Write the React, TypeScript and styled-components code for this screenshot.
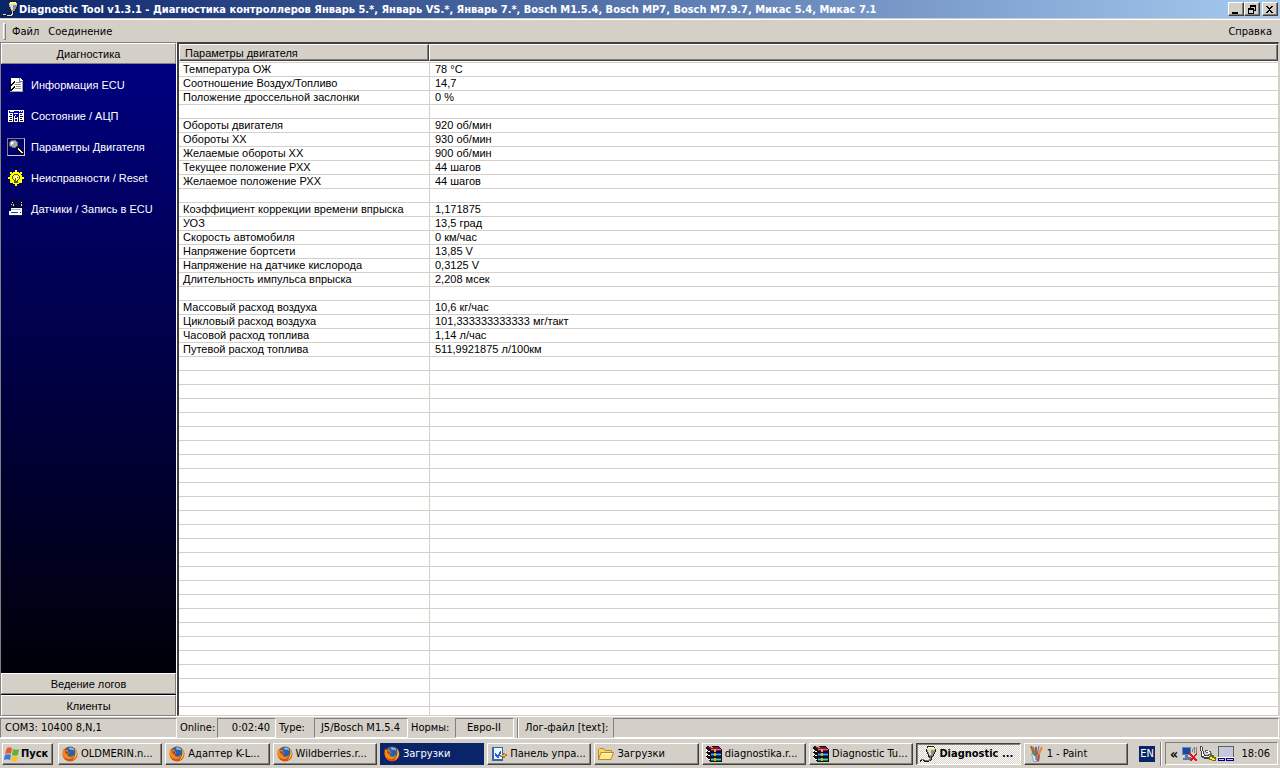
import React from 'react';
import styled, { createGlobalStyle, css } from 'styled-components';

const face = '#d4d0c8';
const uiFont = '"DejaVu Sans Condensed", "Noto Sans", sans-serif';
const gridFont = '"Liberation Sans", Arial, sans-serif';

const raised = css`
  border: 1px solid;
  border-color: #fff #404040 #404040 #fff;
  box-shadow: inset -1px -1px 0 #808080;
`;
const sunken = css`
  border: 1px solid;
  border-color: #808080 #fff #fff #808080;
`;

const Global = createGlobalStyle`
  *, *::before, *::after { box-sizing: border-box; }
  body { margin: 0; background: ${face}; color: #000; font: 11px/14px ${uiFont}; }
  button { font: inherit; color: inherit; padding: 0; margin: 0; border: 0; background: none; border-radius: 0; }
  svg { display: block; flex: none; }
`;

const Desktop = styled.div`
  height: 100vh;
  min-height: 400px;
  display: flex;
  flex-direction: column;
  background: ${face};
`;

const TitleBar = styled.header`
  flex: none;
  height: 18px;
  display: flex;
  align-items: center;
  padding: 0 2px;
  gap: 1px;
  background: linear-gradient(90deg, #0a246a, #a6caf0);
`;
const Title = styled.h1`
  flex: 1;
  min-width: 0;
  margin: 0;
  padding-top: 2px;
  overflow: hidden;
  white-space: nowrap;
  color: #fff;
  font: bold 11px/16px ${uiFont};
`;
const CaptionButton = styled.button<{ $apart?: boolean }>`
  ${raised}
  width: 16px;
  height: 14px;
  margin-left: ${p => (p.$apart ? 1 : -1)}px;
  background: ${face};
  display: grid;
  place-items: center;
`;

const MenuBar = styled.nav`
  flex: none;
  height: 23px;
  display: flex;
  align-items: center;
  margin-top: 1px;
  padding: 1px 5px 0 3px;
  border-top: 1px solid #fff;
`;
const Grip = styled.span`
  width: 3px;
  height: 17px;
  margin-right: 3px;
  border: 1px solid;
  border-color: #fff #808080 #808080 #fff;
`;
const MenuItem = styled.button<{ $end?: boolean }>`
  padding: 0 3px;
  margin-right: ${p => (p.$end ? 0 : 3)}px;
  margin-left: ${p => (p.$end ? 'auto' : 0)};
`;

const Workspace = styled.div`
  flex: 1;
  min-height: 0;
  display: flex;
`;
const Sidebar = styled.aside`
  flex: none;
  width: 177px;
  display: flex;
  flex-direction: column;
  border: solid #808080;
  border-width: 1px 0 0 1px;
  border-right: 1px solid #fff;
  background: linear-gradient(#000084, #000);
  font: 11px/14px ${gridFont};
`;
const SectionButton = styled.button<{ $gap?: boolean }>`
  flex: none;
  height: 21px;
  margin-bottom: ${p => (p.$gap ? 1 : 0)}px;
  background: ${face};
  border: 1px solid;
  border-color: #fff #808080 #808080 #fff;
`;
const SideList = styled.ul`
  flex: 1;
  min-height: 0;
  overflow: hidden;
  list-style: none;
  margin: 0;
  padding: 5px 0 0 6px;
`;
const SideItem = styled.button`
  height: 31px;
  display: flex;
  align-items: center;
  gap: 6px;
  color: #fff;
  white-space: nowrap;
`;
const IconFrame = styled.span<{ $on?: boolean }>`
  border: 1px solid;
  border-color: ${p => (p.$on ? '#808080 #d4d0c8 #d4d0c8 #808080' : 'transparent')};
`;

const GridPanel = styled.main`
  flex: 1;
  min-width: 0;
  overflow: hidden;
  margin-right: 1px;
  border: solid #404040;
  border-width: 2px 1px 1px 2px;
  border-color: #404040 ${face} ${face} #404040;
  background: #fff;
`;
const Grid = styled.table`
  width: 100%;
  table-layout: fixed;
  border-collapse: separate;
  border-spacing: 0;
  font: 11px/13px ${gridFont};
`;
const HeadCell = styled.th`
  height: 17px;
  padding: 0 0 0 5px;
  text-align: left;
  font: 11px/14px ${gridFont};
  background: ${face};
  border: 1px solid;
  border-color: #fff #404040 #404040 #fff;
  box-shadow: inset -1px -1px 0 #808080;
`;
const NameColumn = styled.col`
  width: 250px;
`;
const Cell = styled.td<{ $name?: boolean }>`
  height: 14px;
  padding: 0 0 0 ${p => (p.$name ? 4 : 5)}px;
  white-space: nowrap;
  border-bottom: 1px solid ${face};
  border-left: ${p => (p.$name ? 0 : 1)}px solid ${face};
`;
const Spacer = styled.td`
  height: 2px;
  padding: 0;
  border-bottom: 1px solid ${face};
`;

const StatusBar = styled.footer`
  flex: none;
  height: 22px;
  display: flex;
  align-items: center;
  padding: 0 1px 0 0;
  border-top: 1px solid #fff;
`;
const StatusField = styled.output<{ $width?: number; $align?: string }>`
  ${sunken}
  height: 20px;
  line-height: 18px;
  padding: 0 5px 0 4px;
  white-space: nowrap;
  text-align: ${p => p.$align || 'left'};
  ${p => (p.$width ? `flex: none; width: ${p.$width}px;` : 'flex: 1;')}
`;
const StatusLabel = styled.span<{ $width: number }>`
  flex: none;
  width: ${p => p.$width}px;
  padding-left: 3px;
  white-space: nowrap;
`;
const Divider = styled.span<{ $height: number }>`
  flex: none;
  width: 2px;
  height: ${p => p.$height}px;
  margin: 0 3px;
  background: linear-gradient(90deg, #808080 50%, #fff 50%);
`;

const Taskbar = styled.footer`
  flex: none;
  height: 30px;
  display: flex;
  align-items: center;
  padding: 0 2px 0 2px;
  border-top: 1px solid #fff;
`;
const StartButton = styled.button`
  ${raised}
  flex: none;
  width: 51px;
  height: 22px;
  margin-right: 5px;
  display: flex;
  align-items: center;
  gap: 1px;
  padding-left: 1px;
  font-weight: bold;
`;
const TaskList = styled.div`
  flex: 1;
  min-width: 0;
  display: flex;
  gap: 3px;
`;
const TaskButton = styled.button<{ $look?: 'flash' | 'active' }>`
  ${raised}
  flex: 1 1 0;
  min-width: 0;
  height: 22px;
  display: flex;
  align-items: center;
  gap: 3px;
  padding: 0 4px 0 3px;
  text-align: left;
  ${p => p.$look === 'flash' && css`
    background: #0a246a;
    color: #fff;
    border-color: #0a246a;
    box-shadow: none;
  `}
  ${p => p.$look === 'active' && css`
    background: repeating-conic-gradient(#fff 0 25%, ${face} 0 50%) 0 0 / 2px 2px;
    font-weight: bold;
    border-color: #404040 #fff #fff #404040;
    box-shadow: inset 1px 1px 0 #808080;
  `}
`;
const TaskText = styled.span`
  min-width: 0;
  white-space: nowrap;
`;
const Language = styled.button`
  flex: none;
  width: 16px;
  height: 16px;
  margin: 0 2px 0 11px;
  background: #0a246a;
  color: #fff;
`;
const Tray = styled.div`
  ${sunken}
  flex: none;
  width: 113px;
  height: 23px;
  display: flex;
  align-items: center;
  gap: 2px;
  padding: 0 7px 0 2px;
`;
const Chevron = styled.button`
  width: 12px;
  font-size: 14px;
  font-weight: bold;
`;
const Clock = styled.time`
  margin-left: auto;
`;

const Svg = ({ children, w = 16, h = 16 }: { children: React.ReactNode; w?: number; h?: number }) => (
  <svg width={w} height={h} viewBox={`0 0 ${w} ${h}`} shapeRendering="crispEdges" aria-hidden="true">{children}</svg>
);

const PlugIcon = ({ light = false }: { light?: boolean }) => (
  <Svg>
    <path d="M7 0h7v1h1v2h1v3h-1v2h-1v2h-1v1h-1v3h-1v1H9v1H4v-1H3v-1H2v1H1v1H0v-2h1v-1h3v1h1v1h4v-1h1v-2H9v-1H8V8H7V6H6V3h1z" fill="#1c1c1c" />
    <path d="M8 1h6v1H8z" fill="#fff" />
    <path d="M7 2h8v1H7z" fill="#ffff30" />
    <path d="M7 3h8v3h-1v2h-1v2H9V8H8V6H7z" fill="#909090" />
    <path d="M7 3h8v1H7zM8 4h3v3H9V6H8zM9 7h2v2H9z" fill="#dcdcdc" />
    <path d="M10 10h1v4h-1v1H5v-1h4v-1h1zM1 13h3v1H1z" fill={light ? '#d8d8d8' : '#777'} />
  </Svg>
);
const ChecklistIcon = () => (
  <Svg>
    <path d="M3 1h9l3 3v11H3z" fill="#fff" />
    <path d="M2 14h13v1H2zM14 5h1v10h-1z" fill="#a0a0a0" />
    <path d="M12 1v3h3v1h-4V1z" fill="#888" />
    <path d="M8 5h5v1H8zM7 7h6v1H7zM8 9h5v1H8zM7 11h6v1H7z" fill="#909090" />
    <path d="M1 5h1v1h1v1h1V6h1V5h1V4h1v2H6v1H5v1H4v1H3V8H2V7H1zM1 10h1v1h1v1h1v-1h1v-1h1V9h1v2H6v1H5v1H4v1H3v-1H2v-1H1z" fill="#000" />
  </Svg>
);
const AdcIcon = () => (
  <Svg>
    <path d="M0 2h16v12H0z" fill="#fff" />
    <path d="M1 3h14v2H1z" fill="#0000d8" />
    <path d="M2 3h4v1H2zM11 3h1v1h-1zM13 3h1v1h-1z" fill="#fff" />
    <path d="M5 5h1v9H5zM10 5h1v9h-1zM2 6h2v1H2zM1 8h3v1H1zM2 10h2v1H2zM1 12h3v1H1zM12 6h2v1h-2zM12 8h3v1h-3zM12 10h2v1h-2zM12 12h3v1h-3z" fill="#111" />
    <path d="M6 6h4v3H9v1H7V8h1V7H7v1H6zM7 11h2v2H7z" fill="#0000d8" />
  </Svg>
);
const MagnifierIcon = () => (
  <Svg>
    <path d="M3 1h5v1h1v1h1v4h1v1h1v2h1v1h1v1h1v1h1v2h-3v-1h-1v-1h-1v-1h-1v-1H9V9H4V8H2V7H1V3h1V2h1z" fill="#101010" />
    <path d="M3 1h5v1h1v1h1v4H9v1H8v1H4V8H2V7H1V3h1V2h1z" fill="#707070" />
    <path d="M3 2h5v1h1v4H8v1H4V7H2V3h1z" fill="#a8a8a8" />
    <path d="M3 3h3v1H5v1H4v1H3z" fill="#fff" />
    <path d="M10 9h1v1h1v1h1v1h1v1h1v1h-2v-1h-1v-1h-1v-1h-1z" fill="#ffff90" />
  </Svg>
);
const LampIcon = () => (
  <Svg>
    <path d="M7 0h2v3H7zM7 13h2v3H7zM0 7h3v2H0zM13 7h3v2h-3zM2 2h2v1h1v2H3V4H2zM12 2h2v2h-1v1h-2V3h1zM2 13v-2h1v-1h2v2H4v1zM11 10h2v1h1v2h-2v-1h-1z" fill="#ff0" />
    <path d="M5 2h6v1h1v1h1v1h1v6h-1v1h-1v1h-1v1H5v-1H4v-1H3v-1H2V5h1V4h1V3h1z" fill="#ff0" />
    <path d="M6 4h4v1h1v1h1v3h-1v1h-1v3H6v-3H5V9H4V6h1V5h1z" fill="#55550c" />
    <path d="M6 5h4v1h1v3h-1v1H9v1H7v-1H6V9H5V6h1z" fill="#ffff40" />
    <path d="M7 6h2v3H7z" fill="#fff" />
    <path d="M7 8h1v4H7zM9 7h1v1H9z" fill="#806000" />
  </Svg>
);
const SensorIcon = () => (
  <Svg>
    <path d="M4 0h3v1H5v1H4zM11 0h3v2h-1V1h-2zM1 2h6v2h1V3h1v1h1V2h5v3h-1v1h-4V5H7v1H3V5H2V3H1z" fill="#111" />
    <path d="M5 3h1v2H5zM13 3h1v2h-1zM3 3h1v1H3zM4 1h1v1H4zM13 1h1v1h-1z" fill="#ddd" />
    <path d="M3 7h11v4H3zM1 10h13v4H1z" fill="#fff" />
    <path d="M3 8h10v1H3z" fill="#a8b0c8" />
    <path d="M3 11h7v1H3z" fill="#1040e0" />
    <path d="M2 14h12v1H2zM12 11h1v1h-1z" fill="#222" />
  </Svg>
);
const WindowsIcon = () => (
  <svg width="16" height="16" viewBox="0 0 16 16" aria-hidden="true">
    <path d="M3 2c2-1 3-1 5 0L7 8C5 7 4 7 1 8z" fill="#e8582a" />
    <path d="M9 3c2 1 4 1 6 0l-1 6c-2 1-4 1-6 0z" fill="#62b038" />
    <path d="M1 9c2-1 4-1 6 0l-1 5c-2-1-4-1-6 0z" fill="#3878d8" />
    <path d="M8 10c2 1 4 1 6 0l-1 5c-2 1-4 1-6 0z" fill="#f8c020" />
  </svg>
);
const FirefoxIcon = () => (
  <svg width="16" height="16" viewBox="0 0 17 17" aria-hidden="true">
    <circle cx="8.5" cy="8.5" r="8" fill="#d9500c" />
    <circle cx="8.5" cy="6.8" r="6" fill="#2860ae" />
    <path d="M7 2c3-1 6 0 6 3-1-1-3-1-4-1s-1-1-2-2z" fill="#79c0ed" />
    <path d="M1 3l2 2c1-1 2-1 3-1 0 1 0 2 2 3-1 1-2 1-2 3 2 2 5 2 7-1 0 4-5 6-9 4C1 12 0 8 1 3z" fill="#f48a16" />
    <path d="M14 3c3 4 2 10-3 12 2-2 4-5 3-12z" fill="#ffcc38" />
    <path d="M3 6c2-1 3 0 4 1L5 9z" fill="#ba3608" />
  </svg>
);
const PanelIcon = () => (
  <Svg>
    <path d="M1 1h11v14H1z" fill="#3468a8" /><path d="M3 2h8v11H3z" fill="#eef7ff" />
    <path d="M4 7h1v1h1v1h1V8h1V6h1V5h1v3H9v2H8v2H6v-1H5v-1H4z" fill="#2460d0" />
    <path d="M9 9h3V7h2v1h2v2h-2v2h-2v-1H9z" fill="#b87820" />
    <path d="M10 9h3V8h1v2h-4z" fill="#f0c060" />
  </Svg>
);
const FolderIcon = () => (
  <svg width="16" height="16" viewBox="0 0 16 16" aria-hidden="true">
    <path d="M.5 13.500V3.500l1-1h4l1.500 2h6.500v2" fill="#f8d868" stroke="#b98a20" />
    <path d="M.5 13.500l2.500-7h12.500l-2.500 7z" fill="#ffe78a" stroke="#b98a20" />
    <path d="M4 7.500h10" stroke="#fff8d0" />
  </svg>
);
const RarIcon = () => (
  <Svg>
    <path d="M1 0h12v1h1v1h1v1h1v13H4v-1H3v-1H2v-1H1v-1H0V1h1z" fill="#181018" />
    <path d="M1 1h12v1h1v1H4V2H2zM5 3h10v2H5z" fill="#8c0850" />
    <path d="M5 3h10v1H5z" fill="#e85aa8" />
    <path d="M5 7h10v3H5z" fill="#0848b8" /><path d="M5 8h10v1H5z" fill="#50b0f0" />
    <path d="M5 12h10v3H5z" fill="#087850" /><path d="M5 13h10v1H5z" fill="#50d898" />
    <path d="M0 3h1v1h1v1h2v1H2V5H1v1H0zM0 7h1v1h1v1h2v1H2V9H1v1H0zM0 11h1v1h1v1h2v1H2v-1H1v-1H0z" fill="#fff" />
    <path d="M3 0h3v1h1v1H5V1H3zM8 3h2v3H8zM8 7h2v3H8zM8 12h2v3H8z" fill="#d8b820" />
  </Svg>
);
const PaintIcon = () => (
  <svg width="16" height="16" viewBox="0 0 16 16" aria-hidden="true">
    <path d="M3 7h9l-1 9H5z" fill="#90a8c0" /><path d="M4 8h3l1 7H6z" fill="#d7e8f4" />
    <path d="M3 0l3 9M8 1v8" stroke="#d84830" strokeWidth="2" />
    <path d="M5 1l2 9" stroke="#48a050" strokeWidth="2" />
    <path d="M14 1l-4 9" stroke="#e88a20" strokeWidth="2" />
    <path d="M11 0L9 9M8 8v6" stroke="#3870c8" strokeWidth="1" />
    <path d="M11 9l-1 6" stroke="#d04030" strokeWidth="2" />
  </svg>
);
const NetworkIcon = () => (
  <Svg>
    <path d="M0 1h9v8H0z" fill="#6088c0" /><path d="M1 2h7v6H1z" fill="#1848a0" />
    <path d="M3 9h3v2h3v3H1v-2h2z" fill="#5878a8" />
    <path d="M10 3h1v3h-1zM11 2h1v1h-1zM12 1h1v6h-1zM14 1h1v6h-1z" fill="#808080" />
    <path d="M7 7h2v1h1v1h1v1h1V9h1V8h1V7h1v2h-1v1h-1v2h1v1h1v2h-2v-1h-1v-1h-1v1h-1v1H8v-2h1v-1h1v-1H9v-1H8V9H7z" fill="#e01818" />
  </Svg>
);
const CableIcon = () => (
  <Svg>
    <path d="M0 0h2v1h1v4h1v3h1v1h4v1h1v2H9v1H4v-1H2v-1H1V5H0z" fill="#404040" />
    <path d="M1 1h1v4h1v3h1v2h5v1H4v-1H2V5H1z" fill="#fff" />
    <path d="M5 4h3v1h3v2h1v2h2v2h-4V9H8V7H6V6H5z" fill="#606060" />
    <path d="M6 5h3v1h1v2H8V6H6z" fill="#fff" />
    <path d="M9 10h4v1h3v4h-4v-1H9z" fill="#75710a" />
    <path d="M10 11h2v1h2v1h1v1h-3v-1h-2z" fill="#ffee20" />
  </Svg>
);
const DeskIcon = () => (
  <Svg>
    <path d="M0 0h16v12H0z" fill="#606060" /><path d="M1 1h14v10H1z" fill="#c5c8dc" />
    <path d="M0 11h16v1H0z" fill="#fff" /><path d="M0 12h7v3H0zM8 12h8v3H8z" fill="#000080" />
    <path d="M1 13h5v1H1zM9 13h6v1H9z" fill="#d4d0c8" />
  </Svg>
);

const sideItems = [
  { text: 'Информация ECU', Icon: ChecklistIcon },
  { text: 'Состояние / АЦП', Icon: AdcIcon },
  { text: 'Параметры Двигателя', Icon: MagnifierIcon, on: true },
  { text: 'Неисправности / Reset', Icon: LampIcon },
  { text: 'Датчики / Запись в ECU', Icon: SensorIcon },
];

const readings: [string, string][] = [
  ['Температура ОЖ', '78 °C'],
  ['Соотношение Воздух/Топливо', '14,7'],
  ['Положение дроссельной заслонки', '0 %'],
  ['', ''],
  ['Обороты двигателя', '920 об/мин'],
  ['Обороты ХХ', '930 об/мин'],
  ['Желаемые обороты ХХ', '900 об/мин'],
  ['Текущее положение РХХ', '44 шагов'],
  ['Желаемое положение РХХ', '44 шагов'],
  ['', ''],
  ['Коэффициент коррекции времени впрыска', '1,171875'],
  ['УОЗ', '13,5 град'],
  ['Скорость автомобиля', '0 км/час'],
  ['Напряжение бортсети', '13,85 V'],
  ['Напряжение на датчике кислорода', '0,3125 V'],
  ['Длительность импульса впрыска', '2,208 мсек'],
  ['', ''],
  ['Массовый расход воздуха', '10,6 кг/час'],
  ['Цикловый расход воздуха', '101,333333333333 мг/такт'],
  ['Часовой расход топлива', '1,14 л/час'],
  ['Путевой расход топлива', '511,9921875 л/100км'],
];
const rows = [...readings, ...Array.from({ length: 60 }, (): [string, string] => ['', ''])];

const tasks: { text: string; Icon: React.FC; look?: 'flash' | 'active' }[] = [
  { text: 'OLDMERIN.n...', Icon: FirefoxIcon },
  { text: 'Адаптер K-L...', Icon: FirefoxIcon },
  { text: 'Wildberries.r...', Icon: FirefoxIcon },
  { text: 'Загрузки', Icon: FirefoxIcon, look: 'flash' },
  { text: 'Панель упра...', Icon: PanelIcon },
  { text: 'Загрузки', Icon: FolderIcon },
  { text: 'diagnostika.r...', Icon: RarIcon },
  { text: 'Diagnostic Tu...', Icon: RarIcon },
  { text: 'Diagnostic ...', Icon: PlugIcon, look: 'active' },
  { text: '1 - Paint', Icon: PaintIcon },
];

export default function App() {
  return (
    <Desktop>
      <Global />
      <TitleBar>
        <PlugIcon light />
        <Title>Diagnostic Tool v1.3.1 - Диагностика контроллеров Январь 5.*, Январь VS.*, Январь 7.*, Bosch M1.5.4, Bosch MP7, Bosch M7.9.7, Микас 5.4, Микас 7.1</Title>
        <CaptionButton aria-label="Свернуть">
          <Svg w={10} h={9}><path d="M1 7h6v2H1z" /></Svg>
        </CaptionButton>
        <CaptionButton aria-label="Восстановить">
          <Svg w={10} h={9}><path d="M3 0h6v6H7V5h1V2H4v1H3zM1 3h6v6H1zM2 5v3h4V5z" fillRule="evenodd" /></Svg>
        </CaptionButton>
        <CaptionButton $apart aria-label="Закрыть">
          <Svg w={10} h={9}><path d="M1 1h2v1h1v1h1V2h1V1h2v1H7v1H6v1H5v1h1v1h1v1h1v1H6V7H5V6H4v1H3v1H1V7h1V6h1V5h1V4H3V3H2V2H1z" /></Svg>
        </CaptionButton>
      </TitleBar>
      <MenuBar>
        <Grip />
        <MenuItem>Файл</MenuItem>
        <MenuItem>Соединение</MenuItem>
        <MenuItem $end>Справка</MenuItem>
      </MenuBar>
      <Workspace>
        <Sidebar>
          <SectionButton>Диагностика</SectionButton>
          <SideList>
            {sideItems.map(({ text, Icon, on }) => (
              <li key={text}>
                <SideItem>
                  <IconFrame $on={on}><Icon /></IconFrame>
                  {text}
                </SideItem>
              </li>
            ))}
          </SideList>
          <SectionButton $gap>Ведение логов</SectionButton>
          <SectionButton>Клиенты</SectionButton>
        </Sidebar>
        <GridPanel>
          <Grid>
            <colgroup><NameColumn /><col /></colgroup>
            <thead>
              <tr>
                <HeadCell scope="col">Параметры двигателя</HeadCell>
                <HeadCell scope="col" aria-label="Значение" />
              </tr>
            </thead>
            <tbody>
              <tr><Spacer colSpan={2} /></tr>
              {rows.map(([name, value], i) => (
                <tr key={i}>
                  <Cell $name>{name}</Cell>
                  <Cell>{value}</Cell>
                </tr>
              ))}
            </tbody>
          </Grid>
        </GridPanel>
      </Workspace>
      <StatusBar>
        <StatusField $width={177}>COM3: 10400 8,N,1</StatusField>
        <StatusLabel $width={40}>Online:</StatusLabel>
        <StatusField $width={59} $align="right">0:02:40</StatusField>
        <StatusLabel $width={38}>Type:</StatusLabel>
        <StatusField $width={94} $align="center">J5/Bosch M1.5.4</StatusField>
        <StatusLabel $width={47}>Нормы:</StatusLabel>
        <StatusField $width={59} $align="center">Евро-II</StatusField>
        <Divider $height={20} />
        <StatusLabel $width={91}>Лог-файл [text]:</StatusLabel>
        <StatusField />
      </StatusBar>
      <Taskbar>
        <StartButton><WindowsIcon />Пуск</StartButton>
        <TaskList>
          {tasks.map(({ text, Icon, look }, i) => (
            <TaskButton key={i} $look={look}>
              <Icon />
              <TaskText>{text}</TaskText>
            </TaskButton>
          ))}
        </TaskList>
        <Language>EN</Language>
        <Divider $height={24} />
        <Tray>
          <Chevron aria-label="Показать скрытые значки">«</Chevron>
          <NetworkIcon />
          <CableIcon />
          <DeskIcon />
          <Clock>18:06</Clock>
        </Tray>
      </Taskbar>
    </Desktop>
  );
}
